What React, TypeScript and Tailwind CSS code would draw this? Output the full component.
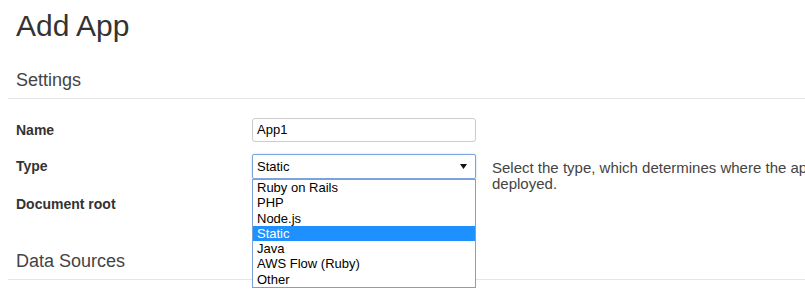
import React from 'react';

const appTypes = ['Ruby on Rails', 'PHP', 'Node.js', 'Static', 'Java', 'AWS Flow (Ruby)', 'Other'];

const SectionHeader = ({ title }: { title: string }) => (
  <div className="border-b border-[#e5e5e5] pl-2 pb-[8px]">
    <h2 className="text-[18px] leading-[20px] text-[#444]">{title}</h2>
  </div>
);

const App = () => {
  const selected = 'Static';

  return (
    <div className="w-[805px] h-[291px] overflow-hidden bg-white font-['Liberation_Sans',Arial,sans-serif] text-[#333]">
      <h1 className="pl-4 pt-[9px] text-[30px] leading-[33px] text-[#333]">Add App</h1>

      <div className="pl-2 mt-[28px]">
        <SectionHeader title="Settings" />
      </div>

      <div className="pl-4 mt-[19px]">
        {/* Name */}
        <div className="flex items-start h-[36px]">
          <label className="w-[236px] shrink-0 text-[14px] leading-[24px] font-bold">Name</label>
          <div className="w-[224px] shrink-0 h-[24px] border border-[#ccc] rounded-[3px] px-[4px] text-[13px] leading-[22px] text-black">
            App1
          </div>
        </div>

        {/* Type */}
        <div className="flex items-start h-[38px]">
          <label className="w-[236px] shrink-0 text-[14px] leading-[24px] font-bold">Type</label>
          <div className="relative w-[224px] shrink-0">
            <div className="flex items-center justify-between h-[25px] border border-[#7ea4e0] rounded-[2px] pl-[4px] pr-[8px] text-[13px] text-black shadow-[0_0_2px_rgba(102,153,230,0.5)]">
              <span>{selected}</span>
              <svg width="7" height="5" viewBox="0 0 7 5">
                <path d="M0 0 L7 0 L3.5 5 Z" fill="#111" />
              </svg>
            </div>
            <ul className="absolute left-0 top-[25px] z-10 w-[224px] bg-white border border-[#7b9fd8]">
              {appTypes.map((t) => (
                <li
                  key={t}
                  className={`h-[15.3px] pl-[4px] text-[13px] leading-[15px] ${
                    t === selected ? 'bg-[#1e90ff] text-white' : 'text-black'
                  }`}
                >
                  {t}
                </li>
              ))}
            </ul>
          </div>
          <p className="ml-4 pt-[6px] text-[15px] leading-[16px] text-[#444] whitespace-nowrap">
            Select the type, which determines where the app will be
            <br />
            deployed.
          </p>
        </div>

        {/* Document root */}
        <div className="flex items-start h-[24px]">
          <label className="w-[236px] shrink-0 text-[14px] leading-[24px] font-bold">Document root</label>
        </div>
      </div>

      <div className="pl-2 mt-[35px]">
        <SectionHeader title="Data Sources" />
      </div>
    </div>
  );
};

export default App;
